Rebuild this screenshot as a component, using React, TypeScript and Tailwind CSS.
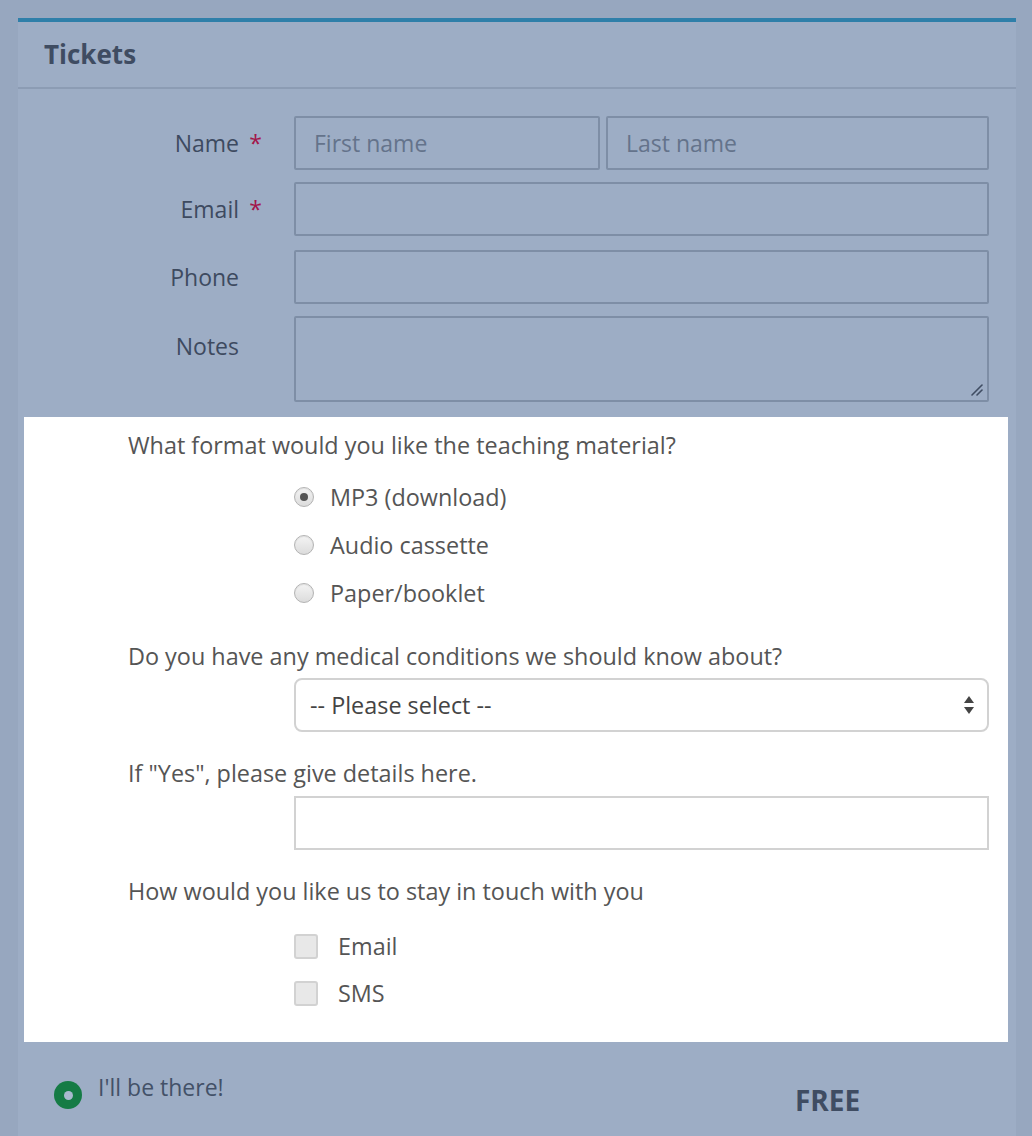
import { useState } from "react";

const font = { fontFamily: '"Open Sans", "Noto Sans", sans-serif' };

function FieldRow({
  label,
  required,
  top,
  children,
}: {
  label: string;
  required?: boolean;
  top?: boolean;
  children: React.ReactNode;
}) {
  return (
    <div className={`flex ${top ? "items-start" : "items-center"}`}>
      <div className={`flex w-[276px] shrink-0 justify-end pr-[32px] text-[23px] leading-[32px] ${top ? "pt-[14px]" : ""}`}>
        <span className="text-[#3d4a60]">{label}</span>
        <span className="w-[23px] text-right text-[#a3154a]">{required ? "*" : ""}</span>
      </div>
      <div className="flex min-w-0 flex-1 gap-[6px]">{children}</div>
    </div>
  );
}

function BlueInput({ placeholder, className = "w-full" }: { placeholder?: string; className?: string }) {
  return (
    <input
      type="text"
      placeholder={placeholder}
      className={`h-[54px] min-w-0 rounded-[2px] border-2 border-[#7e8ea6] bg-transparent px-[18px] text-[23px] text-[#3d4a60] outline-none placeholder:text-[#64738b] ${className}`}
    />
  );
}

function Radio({ checked, label }: { checked?: boolean; label: string }) {
  return (
    <label className="flex items-center gap-[16px]">
      <span className="flex h-[20px] w-[20px] items-center justify-center rounded-full border border-[#b3b3b3] bg-gradient-to-b from-[#f4f4f4] to-[#dcdcdc] shadow-[inset_0_1px_1px_rgba(0,0,0,0.08)]">
        {checked && <span className="h-[8px] w-[8px] rounded-full bg-[#555]" />}
      </span>
      <span className="leading-[32px] text-[#555]">{label}</span>
    </label>
  );
}

function Checkbox({ label }: { label: string }) {
  return (
    <label className="flex items-center gap-[20px]">
      <span className="h-[25px] w-[24px] rounded-[3px] border-2 border-[#d2d2d2] bg-[#e8e8e8]" />
      <span className="leading-[32px] text-[#555]">{label}</span>
    </label>
  );
}

export default function App() {
  const [going] = useState(true);

  return (
    <div style={font} className="min-h-[1136px] bg-[#97a7bf] px-[16px] pt-[18px]">
      <div className="ml-[2px] min-h-[1118px] border-t-4 border-[#2f7fa9] bg-[#9dadc5]">
        <div className="flex h-[67px] items-center border-b-2 border-[#8c9cb4] px-[26px]">
          <h2 className="text-[26px] font-bold text-[#3f4c62]">Tickets</h2>
        </div>

        <div className="flex flex-col pr-[27px] pt-[27px]">
          <FieldRow label="Name" required>
            <BlueInput placeholder="First name" className="w-[306px]" />
            <BlueInput placeholder="Last name" className="flex-1" />
          </FieldRow>
          <div className="mt-[12px]">
            <FieldRow label="Email" required>
              <BlueInput />
            </FieldRow>
          </div>
          <div className="mt-[14px]">
            <FieldRow label="Phone">
              <BlueInput />
            </FieldRow>
          </div>
          <div className="mt-[12px]">
            <FieldRow label="Notes" top>
              <div className="relative w-full">
                <textarea className="block h-[86px] w-full resize-none rounded-[2px] border-2 border-[#7e8ea6] bg-transparent px-[18px] py-[8px] text-[23px] outline-none" />
                <svg width="14" height="14" viewBox="0 0 14 14" className="absolute bottom-[5px] right-[5px] stroke-[#3f4c62]" strokeWidth="1.6" strokeLinecap="round">
                  <path d="M2 12 L12 2" />
                  <path d="M7 12 L12 7" />
                </svg>
              </div>
            </FieldRow>
          </div>
        </div>

        <div className="ml-[6px] mr-[8px] mt-[15px] bg-white pb-[33px] pl-[104px] pr-[19px] pt-[12px] text-[23.4px] leading-[32px] text-[#555]">
          <p>What format would you like the teaching material?</p>
          <div className="ml-[166px] mt-[20px] flex flex-col gap-[16px]">
            <Radio checked label="MP3 (download)" />
            <Radio label="Audio cassette" />
            <Radio label="Paper/booklet" />
          </div>

          <p className="mt-[31px]">Do you have any medical conditions we should know about?</p>
          <div className="ml-[166px] mt-[6px] flex h-[54px] items-center justify-between rounded-[8px] border-2 border-[#d2d2d2] pl-[14px] pr-[12px]">
            <span className="text-[#444]">-- Please select --</span>
            <svg width="12" height="22" viewBox="0 0 12 22" className="fill-[#444]">
              <path d="M6 2 L11 9 L1 9 Z" />
              <path d="M1 13 L11 13 L6 20 Z" />
            </svg>
          </div>

          <p className="mt-[25px]">If "Yes", please give details here.</p>
          <input
            type="text"
            className="ml-[166px] mt-[7px] block h-[54px] w-[calc(100%-166px)] border-2 border-[#d2d2d2] px-[14px] outline-none"
          />

          <p className="mt-[25px]">How would you like us to stay in touch with you</p>
          <div className="ml-[166px] mt-[23px] flex flex-col gap-[15px]">
            <Checkbox label="Email" />
            <Checkbox label="SMS" />
          </div>
        </div>

        <div className="flex items-start pl-[36px] pt-[29px]">
          <span className="mt-[10px] flex h-[28px] w-[28px] shrink-0 items-center justify-center rounded-full bg-[#157b45]">
            {going && <span className="h-[9px] w-[9px] rounded-full bg-[#a9b9cf]" />}
          </span>
          <span className="ml-[16px] w-[697px] shrink-0 text-[23px] leading-[32px] text-[#435168]">I'll be there!</span>
          <span className="mt-[11px] text-[28px] font-bold leading-[36px] text-[#3f4c62]">FREE</span>
        </div>
      </div>
    </div>
  );
}
